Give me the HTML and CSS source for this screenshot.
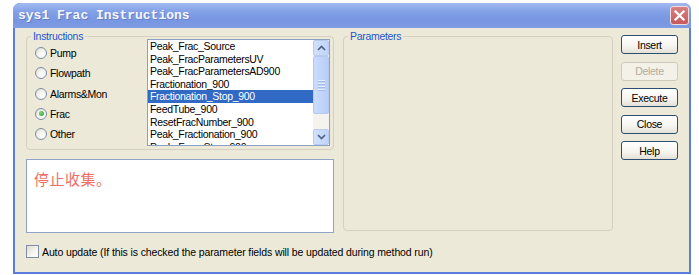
FILE: index.html
```html
<!DOCTYPE html>
<html>
<head>
<meta charset="utf-8">
<link rel="stylesheet" href="styles.css">
</head>
<body>
<div class="window">
  <div class="titlebar">
    <div class="title">sys1 Frac Instructions</div>
    <div class="close">
      <svg width="13" height="13" viewBox="0 0 13 13"><path d="M2.5 2.5 L10.5 10.5 M10.5 2.5 L2.5 10.5" stroke="#fff" stroke-width="2.2" stroke-linecap="square"/></svg>
    </div>
  </div>
  <div class="client">
    <div class="leftcol">
      <div class="group instr">
        <span class="group-label">Instructions</span>
        <div class="radios">
          <div class="radio-row"><span class="radio"></span>Pump</div>
          <div class="radio-row"><span class="radio"></span>Flowpath</div>
          <div class="radio-row"><span class="radio"></span>Alarms&amp;Mon</div>
          <div class="radio-row"><span class="radio checked"></span>Frac</div>
          <div class="radio-row"><span class="radio"></span>Other</div>
        </div>
        <div class="listbox">
          <div class="items">
            <div class="item">Peak_Frac_Source</div>
            <div class="item">Peak_FracParametersUV</div>
            <div class="item">Peak_FracParametersAD900</div>
            <div class="item">Fractionation_900</div>
            <div class="item selected">Fractionation_Stop_900</div>
            <div class="item">FeedTube_900</div>
            <div class="item">ResetFracNumber_900</div>
            <div class="item">Peak_Fractionation_900</div>
            <div class="item">Peak_Frac_Stop_900</div>
          </div>
          <div class="scrollbar">
            <div class="sb-btn"><svg width="9" height="6" viewBox="0 0 9 6"><path d="M1 5 L4.5 1.5 L8 5" fill="none" stroke="#4d6185" stroke-width="1.6"/></svg></div>
            <div class="sb-thumb"><span></span><span></span><span></span><span></span></div>
            <div class="sb-track"></div>
            <div class="sb-btn"><svg width="9" height="6" viewBox="0 0 9 6"><path d="M1 1 L4.5 4.5 L8 1" fill="none" stroke="#4d6185" stroke-width="1.6"/></svg></div>
          </div>
        </div>
      </div>
      <div class="desc">停止收集。</div>
    </div>
    <div class="group params">
      <span class="group-label">Parameters</span>
    </div>
    <div class="buttons">
      <div class="btn">Insert</div>
      <div class="btn disabled">Delete</div>
      <div class="btn">Execute</div>
      <div class="btn">Close</div>
      <div class="btn">Help</div>
    </div>
    <div class="checkrow">
      <span class="checkbox"></span>
      <span>Auto update (If this is checked the parameter fields will be updated during method run)</span>
    </div>
  </div>
</div>
</body>
</html>
```
FILE: styles.css
```css
html, body {
  margin: 0;
  padding: 0;
  background: #ffffff;
}
body {
  font-family: "Liberation Sans", Arial, sans-serif;
  font-size: 10.5px;
  letter-spacing: -0.3px;
  color: #000;
  overflow: hidden;
}
.window {
  margin: 3px 0 0 13px;
  width: 678px;
  height: 271px;
  background: #5a7edf;
  border-radius: 7px 7px 0 0;
  display: flex;
  flex-direction: column;
}
.titlebar {
  height: 25px;
  flex: none;
  display: flex;
  align-items: center;
  padding: 0 2px 0 5px;
  border-radius: 7px 7px 0 0;
  background: linear-gradient(#a3baf1, #82a0e6 35%, #7896e1 70%, #7f9ce4);
}
.title {
  flex: 1;
  font-family: "Liberation Mono", "Courier New", monospace;
  font-weight: bold;
  font-size: 13px;
  letter-spacing: 0;
  color: #f6f7ff;
  text-shadow: 1px 1px 0 #6680c4;
}
.close {
  width: 17px;
  height: 17px;
  border: 1px solid #f3dcdc;
  border-radius: 3px;
  background: linear-gradient(#d98080, #c75a5e);
  display: flex;
  align-items: center;
  justify-content: center;
}
.client {
  flex: 1;
  margin: 0 2px 2px 2px;
  background: #ece9d8;
  padding: 8px 0 0 11px;
  display: grid;
  grid-template-columns: 308px 271px 57px;
  grid-template-rows: auto 1fr;
  column-gap: 8px;
  align-items: start;
}
.group {
  position: relative;
  border: 1px solid #d3d0c0;
  border-radius: 4px;
  box-sizing: border-box;
}
.group-label {
  position: absolute;
  top: -7px;
  left: 4px;
  padding: 0 2px;
  background: #ece9d8;
  color: #1d55cf;
  line-height: 12px;
}
.leftcol {
  display: flex;
  flex-direction: column;
}
.instr {
  height: 114px;
  display: flex;
  align-items: flex-start;
}
.radios {
  padding: 6px 0 0 8px;
  display: flex;
  flex-direction: column;
}
.radio-row {
  height: 20.25px;
  display: flex;
  align-items: center;
  gap: 3px;
}
.radio {
  width: 12px;
  height: 12px;
  box-sizing: border-box;
  border: 1px solid #7d8ea6;
  border-radius: 50%;
  background: radial-gradient(circle at 65% 70%, #ffffff 0%, #f2f1ea 50%, #dcdad0 100%);
  display: flex;
  align-items: center;
  justify-content: center;
}
.radio.checked::after {
  content: "";
  width: 5px;
  height: 5px;
  border-radius: 50%;
  background: radial-gradient(circle at 35% 35%, #7cd67c, #23a023);
}
.listbox {
  margin: 2px 3px 0 auto;
  width: 183px;
  height: 107px;
  box-sizing: border-box;
  border: 1px solid #8aa1c1;
  background: #fff;
  display: flex;
  overflow: hidden;
}
.items {
  flex: 1;
  overflow: hidden;
}
.item {
  height: 12.6px;
  line-height: 12.6px;
  padding-left: 2px;
  white-space: nowrap;
}
.item.selected {
  background: #316ac5;
  color: #fff;
}
.scrollbar {
  width: 16px;
  display: flex;
  flex-direction: column;
  background: #f4f3ee;
}
.sb-btn {
  height: 16px;
  box-sizing: border-box;
  border: 1px solid #b8ccf3;
  border-radius: 2px;
  background: linear-gradient(90deg, #d2e0fb, #c0d3f9);
  display: flex;
  align-items: center;
  justify-content: center;
}
.sb-thumb {
  height: 58px;
  box-sizing: border-box;
  border: 1px solid #b4c8f4;
  border-radius: 2px;
  background: linear-gradient(90deg, #cbdcfc, #b8cdf7);
  display: flex;
  flex-direction: column;
  align-items: center;
  justify-content: center;
  gap: 1px;
}
.sb-thumb span {
  width: 7px;
  height: 1px;
  background: #e6eefd;
  border-bottom: 1px solid #9fb7e9;
}
.sb-track {
  flex: 1;
}
.desc {
  margin-top: 9px;
  height: 74px;
  box-sizing: border-box;
  border: 1px solid #8ea4c4;
  background: #fff;
  padding: 9px 0 0 7px;
  font-family: "Noto Sans CJK SC", sans-serif;
  font-size: 15px;
  letter-spacing: 0.5px;
  line-height: 20px;
  color: #ee6f62;
}
.params {
  margin-left: 1px;
  height: 195px;
}
.buttons {
  margin-top: -1px;
  display: flex;
  flex-direction: column;
  gap: 7.5px;
}
.btn {
  height: 19px;
  box-sizing: border-box;
  border: 1px solid #2c4e73;
  border-radius: 3px;
  background: linear-gradient(#ffffff, #f5f4ef 60%, #e3e0d6);
  display: flex;
  align-items: center;
  justify-content: center;
}
.btn.disabled {
  border-color: #cdcbbd;
  color: #b2ae9e;
  background: #f3f1e8;
}
.checkrow {
  grid-column: 1 / 4;
  margin-top: 12px;
  display: flex;
  align-items: center;
  gap: 3px;
  letter-spacing: -0.12px;
}
.checkbox {
  width: 13px;
  height: 13px;
  box-sizing: border-box;
  border: 1px solid #7d8ea6;
  background: linear-gradient(135deg, #dedcd2, #f6f5f0 60%, #ffffff);
}
```
